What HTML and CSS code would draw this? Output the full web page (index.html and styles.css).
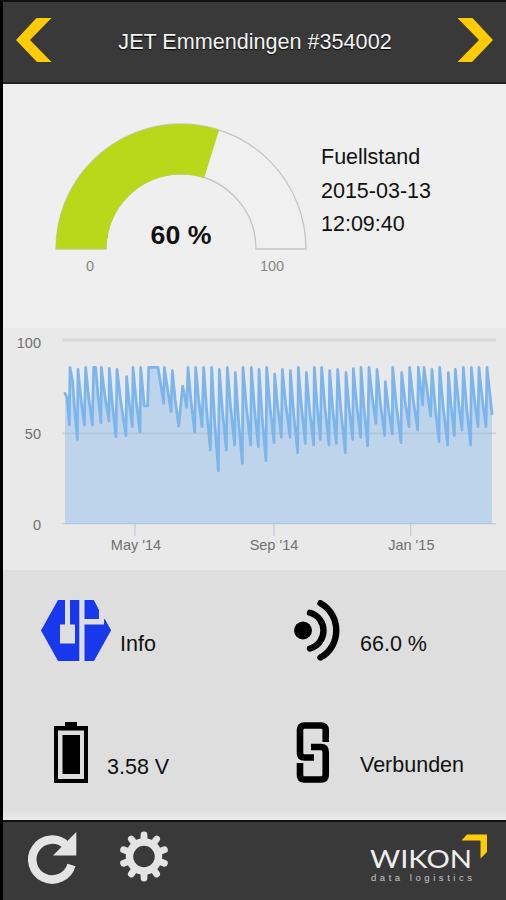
FILE: index.html
```html
<!DOCTYPE html>
<html lang="de">
<head>
  <meta charset="UTF-8" />
  <meta name="viewport" content="width=device-width, initial-scale=1.0"/>
  <title>JET Emmendingen #354002</title>
  <link rel="stylesheet" href="styles.css">
</head>
<body>
  <div class="app">
    <header class="topbar">
      <svg class="arrow" viewBox="0 0 36 44"><path d="M20.5 0H35.5L14 22L35.5 44H21L0 22Z"/></svg>
      <h1>JET Emmendingen #354002</h1>
      <svg class="arrow" viewBox="0 0 36 44"><path d="M15.5 0H.5L22 22L.5 44H15L36 22Z"/></svg>
    </header>

    <section class="level">
      <svg class="gauge" viewBox="51 120 260 160">
        <path class="gauge-back" d="M56 249A125 125 0 0 1 306 249H256A75 75 0 0 0 106 249Z"/>
        <path class="gauge-fill" d="M56 249A125 125 0 0 1 219.1 130.1L204.2 177.7A75 75 0 0 0 106.5 249Z"/>
        <text class="gauge-value" x="181" y="243.5">60 %</text>
        <text class="gauge-label" x="90" y="271">0</text>
        <text class="gauge-label" x="272" y="271">100</text>
      </svg>
      <div class="reading">
        <div>Fuellstand</div>
        <div>2015-03-13</div>
        <div>12:09:40</div>
      </div>
    </section>

    <section class="history">
      <svg class="chart" viewBox="9 24 1509 726">
        <path class="grid-top" d="M186 60H1488"/>
        <path class="grid-line" d="M186 340H1488"/>
        <path class="axis" d="M186 611H1488M405 611V647M822 611V647M1232 611V647"/>
        <path class="area" id="area"/>
        <path class="line" id="line"/>
        <g class="y-labels">
          <text x="123" y="85">100</text>
          <text x="123" y="358">50</text>
          <text x="123" y="630">0</text>
        </g>
        <g class="x-labels">
          <text x="408" y="690">May '14</text>
          <text x="822" y="690">Sep '14</text>
          <text x="1234" y="690">Jan '15</text>
        </g>
      </svg>
    </section>

    <section class="status">
      <div class="item">
        <svg class="icon-info" viewBox="0 0 70 61">
          <path class="blue" d="M17 0H53L70 30.5L53 61H17L0 30.5Z"/>
          <path class="cut" d="M24 0H29V24.5H34V43.5H19V24.5H24ZM38.3 0H43.5V19H58V10L53 0H72V19H63V24.5H43.5V61H38.3Z"/>
          <path class="blue" d="M64 19.8L70 30.5H63Z"/>
        </svg>
        <span>Info</span>
      </div>
      <div class="item">
        <svg class="icon-signal" viewBox="0 0 46 61">
          <circle cx="9" cy="30.5" r="9"/>
          <path d="M16 12.8C34 18 34 43 16 48.5M26.5 3.2C47.5 15 47.5 46 26.5 57.5"/>
        </svg>
        <span>66.0 %</span>
      </div>
      <div class="item">
        <svg class="icon-battery" viewBox="0 0 34 61">
          <path d="M11 0H23V4H34V61H0V4H11ZM4 8.5V57H30V8.5Z" fill-rule="evenodd"/>
          <path d="M8.5 13H26V52H8.5Z"/>
        </svg>
        <span>3.58 V</span>
      </div>
      <div class="item">
        <svg class="icon-link" viewBox="0 0 34 61">
          <path d="M29.7 20V8Q29.7 3.5 25 3.5H8.5Q4 3.5 4 8V31Q4 35.5 8.5 35.5H18M4 41V53Q4 57.5 8.5 57.5H25Q29.7 57.5 29.7 53V30Q29.7 25 25 25H15"/>
        </svg>
        <span>Verbunden</span>
      </div>
    </section>

    <footer class="bottombar">
      <svg class="icon-refresh" viewBox="0 0 49 52">
        <path class="ring" d="M43.5 33A20 20 0 1 1 38 13"/>
        <path class="head" d="M48.3 0V23.5H25Z"/>
      </svg>
      <svg class="icon-gear" viewBox="-24 -25.5 48 51">
        <circle r="14.5"/>
        <g id="teeth"></g>
      </svg>
      <svg class="logo" viewBox="368 830 122 55">
        <text class="brand" x="370" y="868" textLength="102" lengthAdjust="spacingAndGlyphs">WIKON</text>
        <text class="claim" x="371" y="881" textLength="101">data logistics</text>
        <path d="M467 834.5H487V852L480.5 858.5V840.5H461.5Z"/>
      </svg>
    </footer>
  </div>

  <script>
    const points = [
      [195,220],[201,232],[208,315],[210,142],[218,185],[232,358],[234,148],[253,315],[257,142],
      [277,315],[281,142],[287,142],[303,308],[304,142],[327,303],[328,145],[348,350],[351,148],
      [378,347],[380,170],[397,320],[399,142],[420,336],[422,142],[433,258],[443,258],[446,142],
      [474,142],[491,250],[493,142],[513,275],[517,152],[536,318],[548,198],[560,262],[564,142],
      [584,335],[587,142],[606,320],[611,142],[631,390],[635,142],[655,452],[658,148],[679,390],
      [682,142],[704,375],[706,158],[727,430],[729,142],[752,375],[754,142],[775,380],[777,148],
      [798,422],[800,142],[822,368],[824,162],[844,352],[847,148],[870,352],[871,152],[893,398],
      [895,142],[916,370],[919,158],[941,375],[943,142],[961,358],[965,142],[987,375],[989,152],
      [1009,370],[1013,148],[1036,398],[1038,158],[1058,358],[1060,146],[1082,352],[1083,142],
      [1103,378],[1107,142],[1128,310],[1131,148],[1154,347],[1156,185],[1177,342],[1178,142],
      [1203,368],[1205,158],[1227,320],[1229,142],[1253,330],[1255,142],[1268,255],[1272,142],
      [1292,288],[1296,148],[1317,365],[1319,142],[1343,375],[1345,158],[1363,347],[1366,148],
      [1386,330],[1390,142],[1412,375],[1414,142],[1434,320],[1437,142],[1458,320],[1461,142],
      [1476,282]
    ];
    // each fall has a small bend halfway down
    const path = 'M' + points.map((p, i) => {
      const prev = points[i - 1];
      if (!prev || p[1] - prev[1] < 150) return p.join(' ');
      const kneeX = prev[0] + (p[0] - prev[0]) * 0.45;
      const kneeY = prev[1] + (p[1] - prev[1]) * 0.52;
      return `${kneeX} ${kneeY}L${p.join(' ')}`;
    }).join('L');
    document.getElementById('line').setAttribute('d', path);
    document.getElementById('area').setAttribute('d', path + 'V611H195Z');

    let teeth = '';
    for (let i = 0; i < 10; i++) {
      teeth += `<path d="M0 -17V-21.5" transform="rotate(${i * 36})"/>`;
    }
    document.getElementById('teeth').innerHTML = teeth;
  </script>
</body>
</html>
```
FILE: styles.css
```css
* {
  box-sizing: border-box;
}
body {
  margin: 0;
  background: #000;
  color: #111;
  font-family: "Liberation Sans", Arial, sans-serif;
  font-size: 21.5px;
}
svg {
  display: block;
  flex: none;
}
.app {
  width: 506px;
  height: 900px;
  border-left: 3px solid #000;
  border-top: 2px solid #111;
  display: flex;
  flex-direction: column;
  overflow: hidden;
}
.topbar {
  height: 82px;
  background: #393939;
  border-bottom: 2px solid #222;
  display: flex;
  align-items: flex-start;
  justify-content: space-between;
  padding: 16px 13px 0;
}
.topbar h1 {
  margin: 0;
  padding: 11px 0 0 1px;
  font-size: 21.6px;
  font-weight: normal;
  color: #f4f4f4;
  text-shadow: 0 1px 1px #000;
  line-height: 26px;
}
.arrow {
  width: 36px;
  height: 44px;
  fill: #ffcb05;
}
.level {
  height: 244px;
  background: #efefef;
  display: flex;
  padding: 36px 0 0 48px;
}
.gauge {
  width: 260px;
  height: 160px;
}
.gauge-back {
  fill: #f0f0f0;
  stroke: #c4c4c4;
  stroke-width: 1.3;
}
.gauge-fill {
  fill: #b9d819;
}
.gauge-value {
  font-size: 26.7px;
  font-weight: bold;
  fill: #111;
  text-anchor: middle;
}
.gauge-label {
  font-size: 14.5px;
  fill: #858585;
  text-anchor: middle;
}
.reading {
  padding: 21px 0 0 10px;
  line-height: 33.6px;
}
.history {
  height: 242px;
  background: #e9e9e9;
}
.chart {
  width: 503px;
  height: 242px;
}
.grid-top {
  stroke: #d8d8d8;
  stroke-width: 9;
}
.grid-line {
  stroke: #d2d2d2;
  stroke-width: 5;
}
.axis {
  fill: none;
  stroke: #c3ccda;
  stroke-width: 4;
}
.area {
  fill: rgba(124, 181, 236, 0.4);
}
.line {
  fill: none;
  stroke: #7cb5ec;
  stroke-width: 8.2;
  stroke-linejoin: round;
  stroke-linecap: round;
}
.y-labels, .x-labels {
  font-size: 43.5px;
  fill: #707070;
}
.y-labels {
  text-anchor: end;
}
.x-labels {
  text-anchor: middle;
}
.status {
  height: 250px;
  background: linear-gradient(#dedede 240px, #e9e9e9 248px);
  display: grid;
  grid-template-columns: 253px 250px;
  grid-template-rows: 122px 128px;
  padding-top: 30px;
}
.item {
  display: flex;
  align-items: flex-start;
}
.item span {
  line-height: 26px;
  padding-top: 31px;
}
.item:nth-child(3) span {
  padding-top: 32px;
}
.item:nth-child(4) span {
  padding-top: 30px;
}
.icon-info {
  width: 70px;
  height: 61px;
  margin: 0 9px 0 38px;
}
.icon-info .blue {
  fill: #1838ee;
}
.icon-info .cut {
  fill: #dedede;
}
.icon-signal {
  width: 46px;
  height: 61px;
  margin: 0 20px 0 38px;
}
.icon-signal path {
  fill: none;
  stroke: #000;
  stroke-width: 6.4;
  stroke-linecap: round;
}
.icon-battery {
  width: 34px;
  height: 61px;
  margin: 0 19px 0 51px;
}
.icon-link {
  width: 34px;
  height: 61px;
  margin: 0 30px 0 40px;
  fill: none;
  stroke: #000;
  stroke-width: 6.6;
}
.bottombar {
  height: 80px;
  background: #393939;
  border-top: 2px solid #111;
  display: flex;
  align-items: flex-start;
}
.icon-refresh {
  width: 49px;
  height: 52px;
  margin: 10px 0 0 25px;
  overflow: visible;
}
.icon-refresh .ring {
  fill: none;
  stroke: #e4e4e4;
  stroke-width: 8.5;
}
.icon-refresh .head {
  fill: #e4e4e4;
}
.icon-gear {
  width: 48px;
  height: 51px;
  margin: 9px 0 0 43px;
  fill: none;
  stroke: #e4e4e4;
  stroke-width: 7.5;
}
.icon-gear g {
  stroke-width: 6.8;
  stroke-linecap: round;
}
.logo {
  width: 122px;
  height: 55px;
  margin: 8px 16px 0 auto;
}
.logo path {
  fill: #ffcb05;
}
.brand {
  font-family: Lato, "Liberation Sans", sans-serif;
  font-size: 25px;
  fill: #eee;
}
.claim {
  font-family: "Liberation Sans", sans-serif;
  font-size: 9.5px;
  fill: #c8c8c8;
}
```
